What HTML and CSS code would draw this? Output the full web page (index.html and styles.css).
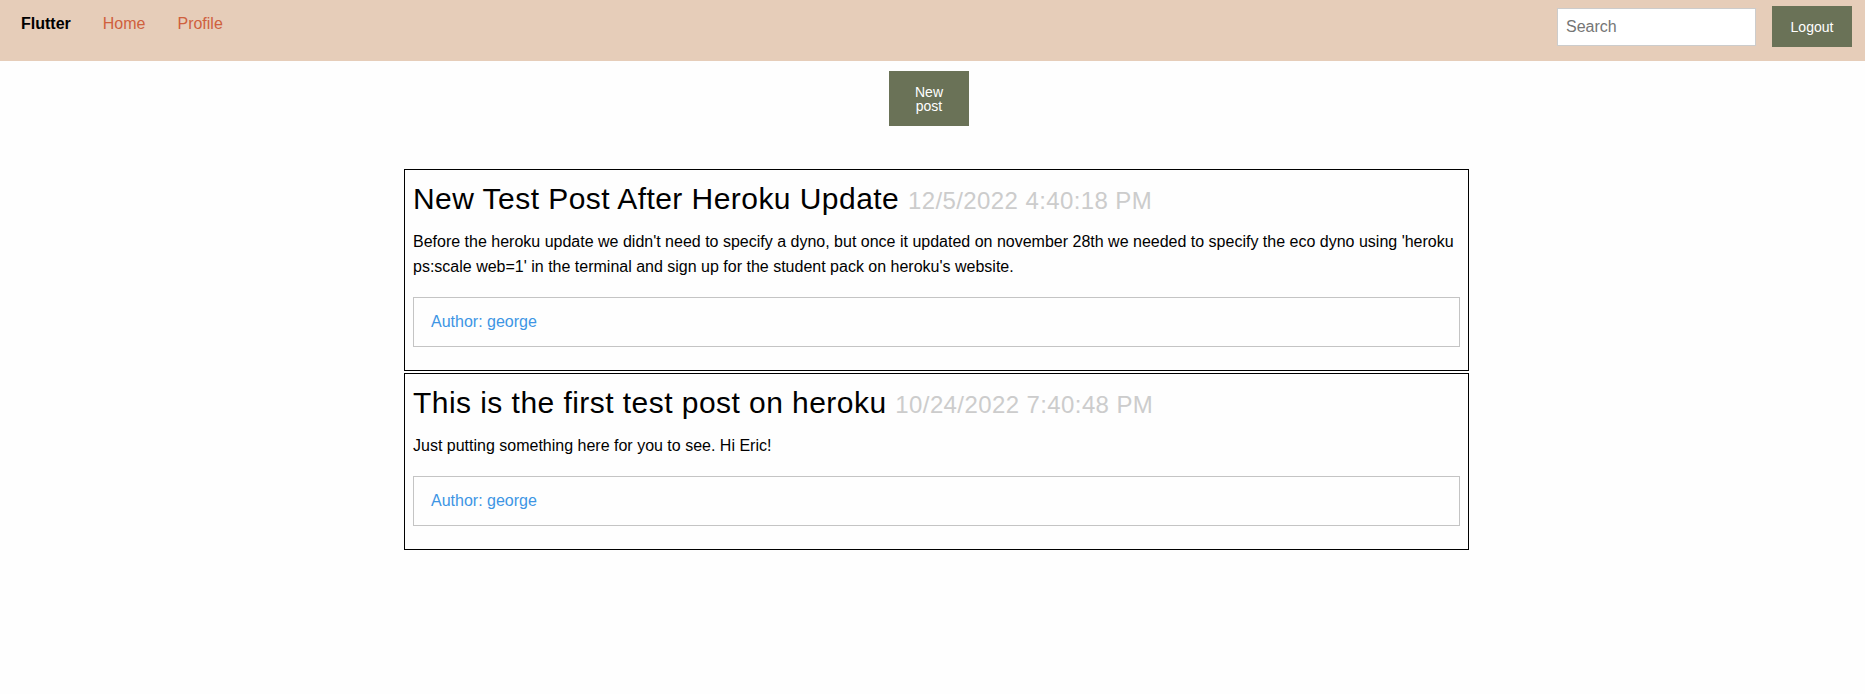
FILE: index.html
```html
<!DOCTYPE html>
<html lang="en">
<head>
<meta charset="utf-8">
<title>Flutter</title>
<link rel="stylesheet" href="styles.css">
</head>
<body>
<header class="navbar">
  <nav class="nav-left">
    <span class="brand">Flutter</span>
    <a class="nav-link" href="#">Home</a>
    <a class="nav-link" href="#">Profile</a>
  </nav>
  <div class="nav-right">
    <input class="search" type="text" placeholder="Search">
    <button class="btn logout">Logout</button>
  </div>
</header>
<main>
  <div class="newpost-row">
    <button class="btn newpost">New post</button>
  </div>
  <section class="feed">
    <article class="post">
      <h2 class="post-title">New Test Post After Heroku Update <span class="post-date">12/5/2022 4:40:18 PM</span></h2>
      <p class="post-body">Before the heroku update we didn't need to specify a dyno, but once it updated on november 28th we needed to specify the eco dyno using 'heroku ps:scale web=1' in the terminal and sign up for the student pack on heroku's website.</p>
      <div class="post-author">Author: george</div>
    </article>
    <article class="post">
      <h2 class="post-title">This is the first test post on heroku <span class="post-date">10/24/2022 7:40:48 PM</span></h2>
      <p class="post-body">Just putting something here for you to see. Hi Eric!</p>
      <div class="post-author">Author: george</div>
    </article>
  </section>
</main>
</body>
</html>
```
FILE: styles.css
```css
* { box-sizing: border-box; }

html, body {
  margin: 0;
  padding: 0;
  background: #fefefe;
  font-family: "Liberation Sans", Arial, sans-serif;
  color: #000;
}

.navbar {
  display: flex;
  justify-content: space-between;
  align-items: flex-start;
  height: 61px;
  padding: 0 13px 0 21px;
  background: #e6cdb9;
}

.nav-left {
  display: flex;
  gap: 32px;
  padding-top: 15px;
  font-size: 16px;
  line-height: 18px;
}

.brand {
  font-weight: bold;
  color: #000;
}

.nav-link {
  color: #cf603d;
  text-decoration: none;
}

.nav-right {
  display: flex;
  align-items: center;
  gap: 16px;
  padding-top: 6px;
}

.search {
  width: 199px;
  height: 38px;
  padding: 0 8px;
  border: 1px solid #cccccc;
  background: #fff;
  font-family: "Liberation Sans", Arial, sans-serif;
  font-size: 16px;
  color: #000;
  outline: none;
}

.search::placeholder {
  color: #757575;
}

.btn {
  border: 0;
  outline: none;
  background: #6a7257;
  color: #fff;
  font-family: "Liberation Sans", Arial, sans-serif;
  font-size: 14px;
  cursor: pointer;
}

.logout {
  width: 80px;
  height: 41px;
  padding: 0;
}

.newpost-row {
  display: flex;
  justify-content: center;
  padding: 10px 7px 0 0;
}

.newpost {
  width: 80px;
  padding: 13.5px 20px;
  line-height: 14px;
  text-align: center;
}

.feed {
  width: 1073px;
  margin: 43px auto 0;
  padding-left: 8px;
  display: flex;
  flex-direction: column;
  gap: 2px;
}

.post {
  width: 1065px;
  border: 1px solid #000;
  padding: 0 8px;
}

.post-title {
  margin: 11px 0 12px;
  font-size: 30px;
  line-height: 36px;
  font-weight: normal;
  letter-spacing: 0.45px;
  color: #000;
}

.post-date {
  font-size: 24px;
  line-height: 24px;
  letter-spacing: 0.4px;
  color: #cccccc;
}

.post-body {
  margin: 0 0 18px;
  font-size: 16px;
  line-height: 25px;
  color: #000;
}

.post-author {
  margin-bottom: 23px;
  padding: 12px 17px;
  border: 1px solid #c4c4c4;
  font-size: 16px;
  line-height: 24px;
  color: #3d95e4;
}
```
